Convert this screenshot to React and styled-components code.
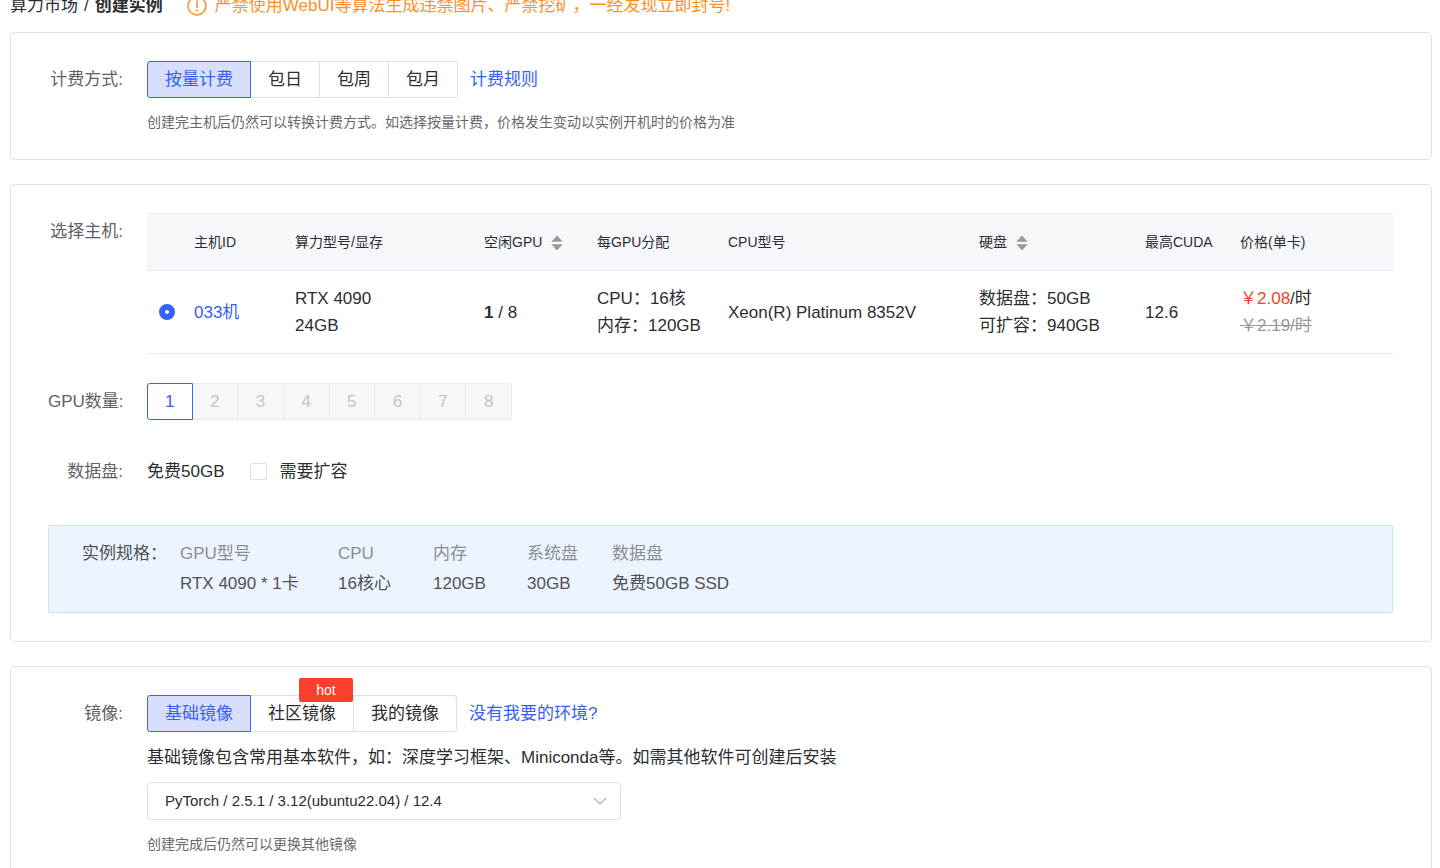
import React, { useState } from 'react';
import styled, { createGlobalStyle } from 'styled-components';

const billingModes = ['按量计费', '包日', '包周', '包月'];
const imageTypes = ['基础镜像', '社区镜像', '我的镜像'];
const gpuCounts = [1, 2, 3, 4, 5, 6, 7, 8];
const columnWidths = [47, 101, 189, 113, 131, 251, 166, 95];

const specs = [
  { name: 'GPU型号', value: 'RTX 4090 * 1卡' },
  { name: 'CPU', value: '16核心' },
  { name: '内存', value: '120GB' },
  { name: '系统盘', value: '30GB' },
  { name: '数据盘', value: '免费50GB SSD' },
];

const SortIcon = () => (
  <SortSvg width="12" height="16" viewBox="0 0 12 16" aria-hidden="true">
    <path d="M6 0.5L11.7 6.8H0.3Z" />
    <path d="M6 15.5L11.7 9.2H0.3Z" />
  </SortSvg>
);

const App = () => {
  const [billing, setBilling] = useState('按量计费');
  const [imageType, setImageType] = useState('基础镜像');
  const [expand, setExpand] = useState(false);

  return (
    <Page>
      <GlobalStyle />
      <TopBar>
        <Breadcrumb>
          <span>算力市场</span>
          <span>/</span>
          <strong>创建实例</strong>
        </Breadcrumb>
        <Warning>
          <svg width="20" height="20" viewBox="0 0 20 20" fill="none" aria-hidden="true">
            <circle cx="10" cy="10" r="9" stroke="currentColor" strokeWidth="1.4" />
            <path d="M10 4.5V12" stroke="currentColor" strokeWidth="1.5" />
            <circle cx="10" cy="14.6" r="1" fill="currentColor" />
          </svg>
          <span>严禁使用WebUI等算法生成违禁图片、严禁挖矿，一经发现立即封号!</span>
        </Warning>
      </TopBar>

      <Card>
        <Row>
          <Label>计费方式:</Label>
          <Content>
            <Line>
              <Group>
                {billingModes.map((mode) => (
                  <Option key={mode} type="button" $active={mode === billing} onClick={() => setBilling(mode)}>
                    {mode}
                  </Option>
                ))}
              </Group>
              <Link href="#rules">计费规则</Link>
            </Line>
            <Hint>创建完主机后仍然可以转换计费方式。如选择按量计费，价格发生变动以实例开机时的价格为准</Hint>
          </Content>
        </Row>
      </Card>

      <Card>
        <Row>
          <Label>选择主机:</Label>
          <Content>
            <Table>
              <colgroup>
                {columnWidths.map((width, i) => (
                  <col key={i} style={{ width }} />
                ))}
                <col />
              </colgroup>
              <thead>
                <tr>
                  <th />
                  <th>主机ID</th>
                  <th>算力型号/显存</th>
                  <th>空闲GPU<SortIcon /></th>
                  <th>每GPU分配</th>
                  <th>CPU型号</th>
                  <th>硬盘<SortIcon /></th>
                  <th>最高CUDA</th>
                  <th>价格(单卡)</th>
                </tr>
              </thead>
              <tbody>
                <tr>
                  <td>
                    <Radio type="radio" id="host-033" name="host" defaultChecked />
                  </td>
                  <td>
                    <HostName htmlFor="host-033">033机</HostName>
                  </td>
                  <td>RTX 4090<br />24GB</td>
                  <td><b>1</b> / 8</td>
                  <td>CPU：16核<br />内存：120GB</td>
                  <td>Xeon(R) Platinum 8352V</td>
                  <td>数据盘：50GB<br />可扩容：940GB</td>
                  <td>12.6</td>
                  <td>
                    <Price>￥2.08</Price>/时<br />
                    <OldPrice>￥2.19/时</OldPrice>
                  </td>
                </tr>
              </tbody>
            </Table>
          </Content>
        </Row>

        <Row $top={29}>
          <Label>GPU数量:</Label>
          <CountGroup>
            {gpuCounts.map((n) => (
              <Count key={n} type="button" disabled={n > 1}>{n}</Count>
            ))}
          </CountGroup>
        </Row>

        <Row $top={33}>
          <Label>数据盘:</Label>
          <Line>
            <span>免费50GB</span>
            <CheckLabel>
              <Checkbox type="checkbox" checked={expand} onChange={(e) => setExpand(e.target.checked)} />
              需要扩容
            </CheckLabel>
          </Line>
        </Row>

        <SpecBox>
          <SpecTitle>实例规格：</SpecTitle>
          <SpecList>
            {specs.map((spec) => (
              <div key={spec.name}>
                <dt>{spec.name}</dt>
                <dd>{spec.value}</dd>
              </div>
            ))}
          </SpecList>
        </SpecBox>
      </Card>

      <Card>
        <Row>
          <Label>镜像:</Label>
          <Content>
            <Line>
              <Group>
                {imageTypes.map((type) => (
                  <Option key={type} type="button" $active={type === imageType} onClick={() => setImageType(type)}>
                    {type}
                    {type === '社区镜像' && <HotBadge>hot</HotBadge>}
                  </Option>
                ))}
              </Group>
              <Link href="#env">没有我要的环境?</Link>
            </Line>
            <Description>基础镜像包含常用基本软件，如：深度学习框架、Miniconda等。如需其他软件可创建后安装</Description>
            <SelectBox>
              <Select aria-label="镜像">
                <option>PyTorch / 2.5.1 / 3.12(ubuntu22.04) / 12.4</option>
              </Select>
              <Chevron width="14" height="8" viewBox="0 0 14 8" fill="none" aria-hidden="true">
                <path d="M1 1L7 7L13 1" stroke="#a8abb2" strokeWidth="1.2" />
              </Chevron>
            </SelectBox>
            <Hint>创建完成后仍然可以更换其他镜像</Hint>
          </Content>
        </Row>
      </Card>
    </Page>
  );
};

const GlobalStyle = createGlobalStyle`
  * {
    box-sizing: border-box;
  }

  html {
    scrollbar-width: none;
  }

  body {
    margin: 0;
    background: #ffffff;
    color: #2c2d30;
    font-family: 'Liberation Sans', 'Noto Sans CJK SC', sans-serif;
    font-size: 17px;
    line-height: 24px;
  }

  button, select, input {
    font-family: inherit;
    font-size: inherit;
    line-height: inherit;
  }
`;

const Page = styled.div`
  padding: 0 8px 24px 10px;
`;

/* The bar is partly scrolled out of view */
const TopBar = styled.header`
  display: flex;
  align-items: center;
  gap: 24px;
  height: 52px;
  margin-top: -20px;
  white-space: nowrap;
`;

const Breadcrumb = styled.nav`
  display: flex;
  gap: 6px;
`;

const Warning = styled.div`
  display: flex;
  align-items: center;
  gap: 8px;
  color: #ff8f1f;
`;

const Card = styled.section`
  padding: 28px 38px 25px 37px;
  border: 1px solid #dfe1e6;
  border-radius: 5px;

  & + & {
    margin-top: 24px;
  }
`;

const Row = styled.div`
  display: flex;
  margin-top: ${(props) => props.$top || 0}px;
`;

const Label = styled.div`
  flex: none;
  width: 75px;
  margin-right: 24px;
  line-height: 38px;
  height: 37px;
  text-align: right;
  white-space: nowrap;
  color: #606266;
`;

const Content = styled.div`
  flex: 1;
  min-width: 0;
`;

const Line = styled.div`
  display: flex;
  align-items: center;
  min-height: 37px;
`;

const Group = styled.div`
  display: flex;
`;

const Option = styled.button`
  position: relative;
  z-index: ${(props) => (props.$active ? 1 : 0)};
  height: 37px;
  padding: 0 17px;
  border: 1px solid ${(props) => (props.$active ? '#3d63f5' : '#dcdfe6')};
  background: ${(props) => (props.$active ? '#d7dffd' : '#ffffff')};
  color: ${(props) => (props.$active ? '#3860f4' : '#2c2d30')};
  cursor: pointer;

  & + & {
    margin-left: -1px;
  }

  &:first-child {
    border-radius: 3px 0 0 3px;
  }

  &:last-child {
    border-radius: 0 3px 3px 0;
  }
`;

const HotBadge = styled.span`
  position: absolute;
  right: 0;
  top: -18px;
  width: 54px;
  border-radius: 2px;
  background: #fa3f2d;
  color: #ffffff;
  font-size: 14px;
  line-height: 24px;
`;

const Link = styled.a`
  margin-left: 12px;
  color: #3860f4;
  text-decoration: none;
`;

const Hint = styled.p`
  margin: 12px 0 0;
  color: #66686c;
  font-size: 14px;
`;

const Table = styled.table`
  width: 100%;
  table-layout: fixed;
  border-collapse: collapse;
  white-space: nowrap;

  th, td {
    padding: 0;
    text-align: left;
    border-bottom: 1px solid #e6eaf3;
  }

  th {
    height: 57px;
    background: #f5f7fb;
    border-top: 1px solid #ebeef5;
    font-size: 14px;
    font-weight: 400;
  }

  td {
    height: 83px;
    line-height: 27px;
  }
`;

const SortSvg = styled.svg`
  margin-left: 9px;
  vertical-align: middle;
  fill: #97999d;
`;

const Radio = styled.input`
  appearance: none;
  display: block;
  width: 16px;
  height: 16px;
  margin: 0 0 0 12px;
  border: 1px solid #dcdfe6;
  border-radius: 50%;

  &:checked {
    border: 6px solid #3860f4;
  }
`;

const HostName = styled.label`
  color: #3860f4;
`;

const Price = styled.span`
  color: #fa3f2d;
`;

const OldPrice = styled.del`
  color: #97999d;
`;

const CountGroup = styled.div`
  display: grid;
  grid-template-columns: repeat(8, 1fr);
  width: 365px;
`;

const Count = styled.button`
  height: 37px;
  padding: 0;
  border: 1px solid #3d63f5;
  background: #ffffff;
  color: #3860f4;

  &:disabled {
    border-color: #ebecef;
    border-left: 0;
    background: #f7f7f7;
    color: #c3c5ca;
  }

  &:first-child {
    border-radius: 3px 0 0 3px;
  }

  &:last-child {
    border-radius: 0 3px 3px 0;
  }
`;

const CheckLabel = styled.label`
  display: flex;
  align-items: center;
  gap: 12px;
  margin-left: 26px;
`;

const Checkbox = styled.input`
  appearance: none;
  width: 17px;
  height: 17px;
  margin: 0;
  border: 1px solid #dcdfe6;
  border-radius: 2px;

  &:checked {
    background: #3860f4;
  }
`;

const SpecBox = styled.div`
  display: flex;
  margin: 35px 0 3px;
  padding: 13px 33px;
  border: 1px solid #cbe3fb;
  border-radius: 2px;
  background: #ecf5ff;
  color: #505256;
  line-height: 30px;
  white-space: nowrap;
`;

const SpecTitle = styled.div`
  flex: none;
  width: 98px;
`;

const SpecList = styled.dl`
  display: grid;
  grid-template-columns: 158px 95px 94px 85px auto;
  margin: 0;

  dt {
    color: #8a8d93;
  }

  dd {
    margin: 0;
  }
`;

const Description = styled.p`
  margin: 10px 0 8px;
  line-height: 32px;
`;

const SelectBox = styled.div`
  position: relative;
  max-width: 474px;
`;

const Select = styled.select`
  appearance: none;
  display: block;
  width: 100%;
  height: 38px;
  padding: 0 36px 0 17px;
  border: 1px solid #dcdfe6;
  border-radius: 3px;
  background: #ffffff;
  color: #2c2d30;
  font-size: 15px;
`;

const Chevron = styled.svg`
  position: absolute;
  right: 14px;
  top: 15px;
  pointer-events: none;
`;

export default App;
